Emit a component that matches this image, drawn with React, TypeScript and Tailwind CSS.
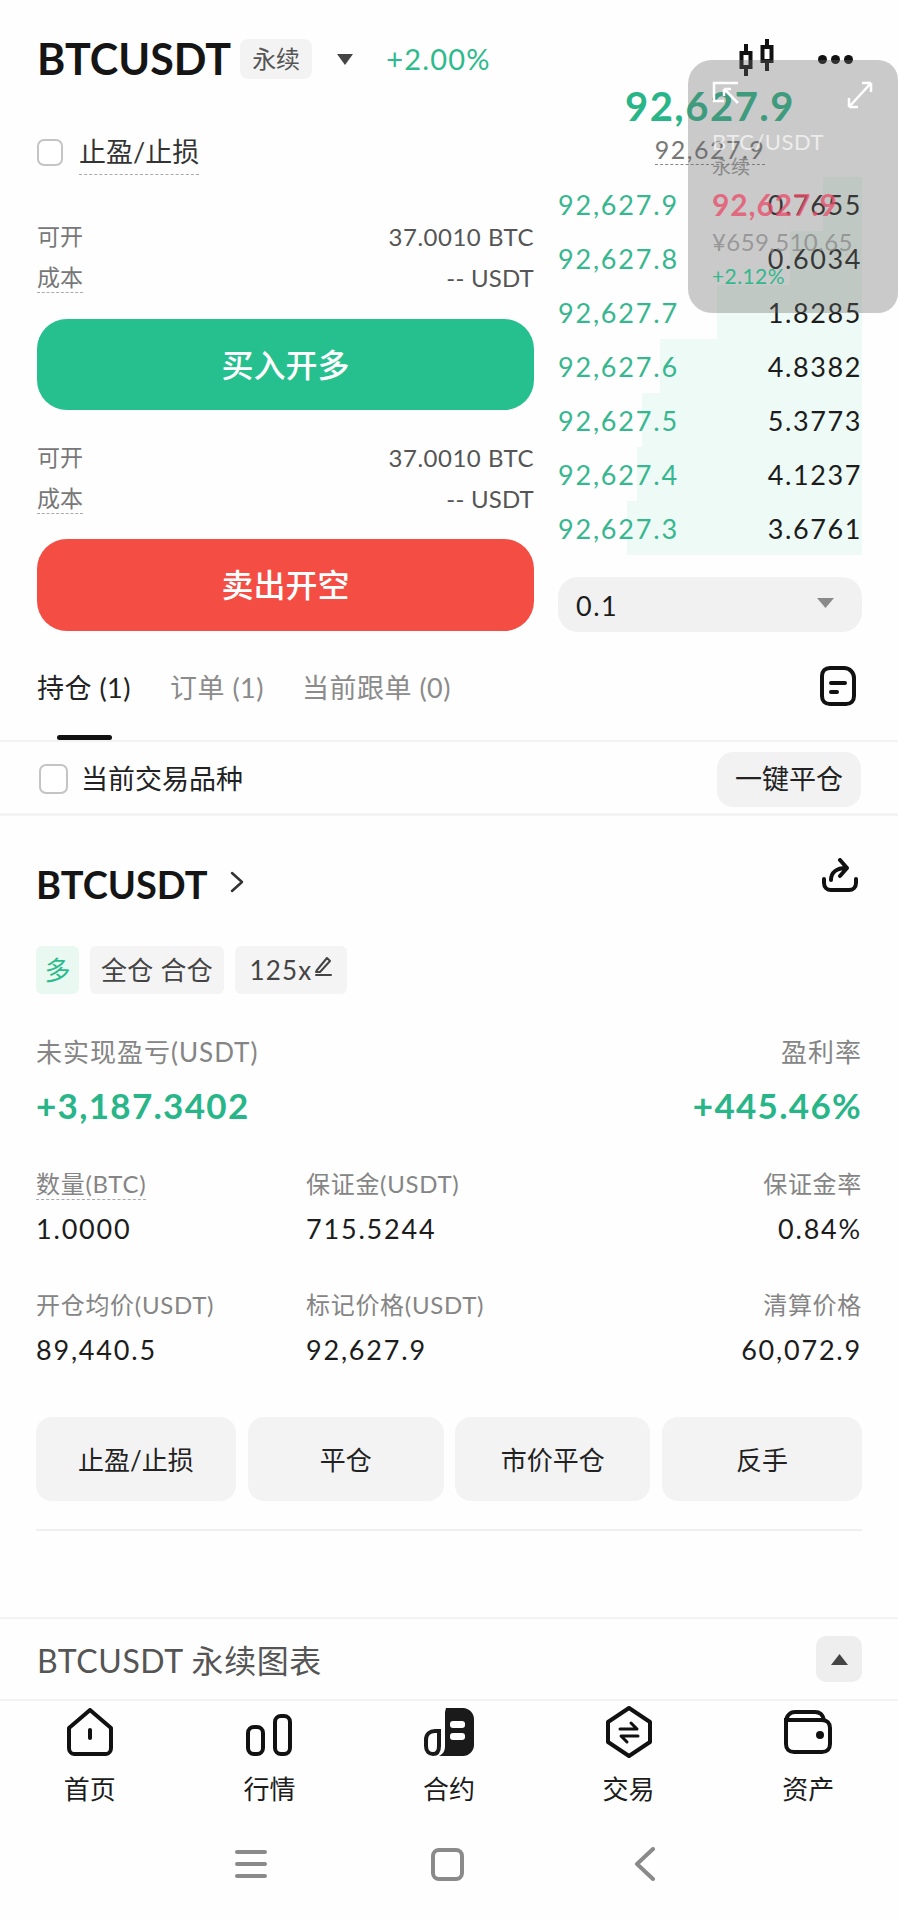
import React from "react";

const book = [
  { price: "92,627.9", qty: "0.7655", w: 39 },
  { price: "92,627.8", qty: "0.6034", w: 72 },
  { price: "92,627.7", qty: "1.8285", w: 145 },
  { price: "92,627.6", qty: "4.8382", w: 202 },
  { price: "92,627.5", qty: "5.3773", w: 220 },
  { price: "92,627.4", qty: "4.1237", w: 225 },
  { price: "92,627.3", qty: "3.6761", w: 235 },
];

function Checkbox({ size }: { size: string }) {
  return <span className={`${size} shrink-0 rounded-[7px] border-2 border-[#c4c4c4] bg-white`} />;
}

function OpenInfo() {
  return (
    <div className="text-[#777]">
      <div className="flex h-[41px] items-center justify-between">
        <span className="text-[23px]">可开</span>
        <span className="text-[24px] tracking-[0.5px] text-[#555]">37.0010 BTC</span>
      </div>
      <div className="flex h-[41px] items-center justify-between">
        <span className="border-b border-dashed border-[#aaa] text-[23px] leading-[30px]">成本</span>
        <span className="text-[24px] tracking-[0.2px] text-[#555]">-- USDT</span>
      </div>
    </div>
  );
}

function Stat({ label, value, right, dashed }: { label: string; value: string; right?: boolean; dashed?: boolean }) {
  return (
    <div className={right ? "text-right" : ""}>
      <div className="flex h-[36px] items-center text-[24px] tracking-[0.7px] text-[#858585]" style={{ justifyContent: right ? "flex-end" : "flex-start" }}>
        <span className={dashed ? "border-b border-dashed border-[#aaa] leading-[30px]" : ""}>{label}</span>
      </div>
      <div className="mt-[9px] flex h-[36px] items-center text-[27px] tracking-[1.8px] text-[#1c1c1c]" style={{ justifyContent: right ? "flex-end" : "flex-start" }}>
        {value}
      </div>
    </div>
  );
}

function NavItem({ label, children }: { label: string; children: React.ReactNode }) {
  return (
    <div className="flex flex-col items-center">
      <div className="flex h-[54px] w-[54px] items-center justify-center">{children}</div>
      <span className="mt-[12px] text-[26px] leading-[36px] text-[#1c1c1c]">{label}</span>
    </div>
  );
}

export default function App() {
  return (
    <main className="relative flex h-[1920px] w-[898px] flex-col overflow-hidden bg-[#fefefe] font-[Lato,'Noto_Sans_CJK_SC',sans-serif] text-[#1c1c1c]">
      {/* Header */}
      <header className="flex h-[84px] items-center px-[37px] pt-[34px]">
        <h1 className="text-[43px] font-bold leading-[50px] text-[#151515]">BTCUSDT</h1>
        <span className="ml-[9px] rounded-[8px] bg-[#f3f3f3] px-[12px] text-[24px] leading-[40px] text-[#555]">永续</span>
        <svg className="ml-[24px]" width="18" height="11" viewBox="0 0 18 11"><path d="M1 0h16l-8 11z" fill="#444" /></svg>
        <span className="ml-[32px] text-[29px] tracking-[1.2px] text-[#2dbb8c]">+2.00%</span>
        <svg className="ml-auto" width="38" height="40" viewBox="0 0 38 40" fill="none" stroke="#111" strokeWidth="4">
          <path d="M8 5v32M29 0v32" />
          <rect x="3.500" y="14" width="9" height="14" fill="#fff" />
          <rect x="24.500" y="8" width="9" height="14" fill="#fff" />
        </svg>
        <div className="ml-[42px] mr-[8px] flex gap-[4px]">
          <span className="h-[9px] w-[9px] rounded-full bg-[#111]" />
          <span className="h-[9px] w-[9px] rounded-full bg-[#111]" />
          <span className="h-[9px] w-[9px] rounded-full bg-[#111]" />
        </div>
      </header>

      {/* Trade panel */}
      <section className="flex gap-[24px] pl-[37px] pr-[36px]">
        <div className="w-[497px]">
          <div className="mt-[50px] flex h-[36px] items-center gap-[16px]">
            <Checkbox size="h-[27px] w-[26px]" />
            <span className="border-b border-dashed border-[#aaa] text-[27px] leading-[44px] text-[#333]">止盈/止损</span>
          </div>
          <div className="mt-[46px]">
            <OpenInfo />
          </div>
          <button className="mt-[21px] h-[91px] w-full rounded-[30px] bg-[#26c08e] text-[32px] font-medium text-white">买入开多</button>
          <div className="mt-[27px]">
            <OpenInfo />
          </div>
          <button className="mt-[20px] h-[92px] w-full rounded-[30px] bg-[#f44d43] text-[32px] font-medium text-white">卖出开空</button>
        </div>

        <div className="w-[304px]">
          <div className="-mt-[2px] flex h-[48px] items-center justify-center text-[40px] font-bold tracking-[1.500px] text-[#28b588]">92,627.9</div>
          <div className="flex h-[42px] items-start justify-center">
            <span className="mt-[5px] border-b border-dashed border-[#888] text-[25px] leading-[29px] tracking-[1.500px] text-[#777]">92,627.9</span>
          </div>
          <div className="mt-[5px]">
            {book.map((row) => (
              <div key={row.price} className="relative flex h-[54px] items-center justify-between pt-[2px]">
                <div className="absolute bottom-0 right-0 top-0 bg-[#eefaf5]" style={{ width: row.w }} />
                <span className="relative text-[27px] tracking-[1.8px] text-[#37b78f]">{row.price}</span>
                <span className="relative text-[27px] tracking-[1.6px] text-[#1c1c1c]">{row.qty}</span>
              </div>
            ))}
          </div>
          <div className="mt-[22px] flex h-[55px] items-center justify-between rounded-[20px] bg-[#f1f1f1] pl-[18px] pr-[28px]">
            <span className="pt-[3px] text-[27px] tracking-[1.5px]">0.1</span>
            <svg className="mb-[4px]" width="17" height="10" viewBox="0 0 17 10"><path d="M0 0h17l-8.500 10z" fill="#8a8a8a" /></svg>
          </div>
        </div>
      </section>

      {/* Tabs */}
      <nav className="border-b-2 border-[#f3f3f3] px-[37px] pt-[36px]">
        <div className="flex h-[40px] items-center text-[27px] tracking-[0.5px] text-[#8b8b8b]">
          <span className="w-[133px] text-[#222]">持仓 (1)</span>
          <span className="w-[132px]">订单 (1)</span>
          <span>当前跟单 (0)</span>
          <svg className="mb-[4px] ml-auto mr-[5px]" width="36" height="40" viewBox="0 0 36 40" fill="none" stroke="#111" strokeWidth="4" strokeLinecap="round">
            <path d="M10 2h14c6 0 10 5 10 10v18c0 5-3 8-8 8H10c-5 0-8-3-8-8V10c0-5 3-8 8-8z" />
            <path d="M11 17h14M11 26h6" />
          </svg>
        </div>
        <div className="ml-[20px] mt-[27px] h-[5px] w-[55px] rounded-full bg-[#111]" />
      </nav>

      {/* Filter */}
      <div className="flex h-[74px] items-center justify-between border-b-[3px] border-[#f3f3f3] pl-[39px] pr-[37px] pt-[3px]">
        <div className="flex items-center gap-[13px]">
          <Checkbox size="h-[30px] w-[29px]" />
          <span className="text-[27px] text-[#222]">当前交易品种</span>
        </div>
        <button className="h-[55px] w-[144px] rounded-[16px] bg-[#f2f2f2] text-[27px] text-[#222]">一键平仓</button>
      </div>

      {/* Position */}
      <section className="px-[36px]">
        <div className="mt-[43px] flex h-[50px] items-center">
          <span className="text-[38px] font-bold text-[#151515]">BTCUSDT</span>
          <svg className="mb-[4px] ml-[22px]" width="14" height="22" viewBox="0 0 14 22" fill="none" stroke="#333" strokeWidth="2.500" strokeLinecap="round" strokeLinejoin="round"><path d="M2 2l10 9-10 9" /></svg>
          <svg className="mb-[18px] ml-auto mr-[4px]" width="36" height="34" viewBox="0 0 36 34" fill="none" stroke="#111" strokeWidth="4" strokeLinecap="round" strokeLinejoin="round">
            <path d="M2 21v4c0 4 3 7 7 7h18c4 0 7-3 7-7v-4" />
            <path d="M9 22c0-8 6-12 15-12M18 2l7 8-7 8" />
          </svg>
        </div>

        <div className="mt-[37px] flex h-[48px] text-[26px]">
          <span className="flex w-[43px] items-center justify-center rounded-[6px] bg-[#e9f9f2] text-[#2dbb8c]">多</span>
          <span className="ml-[11px] flex w-[134px] items-center justify-center rounded-[6px] bg-[#f4f4f4] tracking-[0.3px] text-[#444]">全仓 合仓</span>
          <span className="ml-[11px] flex w-[112px] items-center justify-center rounded-[6px] bg-[#f4f4f4] tracking-[1.2px] text-[#444]">
            125x
            <svg className="mb-[8px]" width="20" height="22" viewBox="0 0 20 22" fill="none" stroke="#444" strokeWidth="2" strokeLinecap="round" strokeLinejoin="round">
              <path d="M3 20h15M4 15L14 3l3 3L7 17l-4 0z" />
            </svg>
          </span>
        </div>

        <div className="mt-[40px] flex h-[36px] items-center justify-between text-[26px] tracking-[1px] text-[#858585]">
          <span>未实现盈亏(USDT)</span>
          <span>盈利率</span>
        </div>
        <div className="mt-[15px] flex h-[40px] items-center justify-between text-[35px] font-bold tracking-[1.3px] text-[#28b588]">
          <span>+3,187.3402</span>
          <span>+445.46%</span>
        </div>

        <div className="mt-[41px] grid grid-cols-[270px_1fr_auto]">
          <Stat label="数量(BTC)" value="1.0000" dashed />
          <Stat label="保证金(USDT)" value="715.5244" />
          <Stat label="保证金率" value="0.84%" right />
        </div>
        <div className="mt-[40px] grid grid-cols-[270px_1fr_auto]">
          <Stat label="开仓均价(USDT)" value="89,440.5" />
          <Stat label="标记价格(USDT)" value="92,627.9" />
          <Stat label="清算价格" value="60,072.9" right />
        </div>

        <div className="mt-[49px] flex h-[84px] justify-between text-[26px] text-[#222]">
          <button className="w-[200px] rounded-[16px] bg-[#f3f3f3] pt-[3px]">止盈/止损</button>
          <button className="w-[196px] rounded-[16px] bg-[#f3f3f3] pt-[3px]">平仓</button>
          <button className="w-[195px] rounded-[16px] bg-[#f3f3f3] pt-[3px]">市价平仓</button>
          <button className="w-[200px] rounded-[16px] bg-[#f3f3f3] pt-[3px]">反手</button>
        </div>
        <div className="mt-[28px] h-[2px] bg-[#f0f0f0]" />
      </section>

      {/* Chart bar */}
      <div className="mt-[86px] flex h-[84px] items-center justify-between border-y-2 border-[#f3f3f3] pl-[37px] pr-[36px]">
        <span className="pt-[3px] text-[32px] tracking-[0.6px] text-[#555]">BTCUSDT 永续图表</span>
        <span className="flex h-[46px] w-[46px] items-center justify-center rounded-[10px] bg-[#eee]">
          <svg width="17" height="11" viewBox="0 0 17 11"><path d="M8.500 0L17 11H0z" fill="#444" /></svg>
        </span>
      </div>

      {/* Bottom nav */}
      <footer className="mt-[4px] grid grid-cols-5">
        <NavItem label="首页">
          <svg width="46" height="48" viewBox="0 0 46 48" fill="none" stroke="#111" strokeWidth="4" strokeLinejoin="round" strokeLinecap="round">
            <path d="M23 2L44 20v20c0 3-2 6-5 6H7c-3 0-5-3-5-6V20z" />
            <path d="M23 22v8" />
          </svg>
        </NavItem>
        <NavItem label="行情">
          <svg className="mt-[5px]" width="46" height="42" viewBox="0 0 46 42" fill="none" stroke="#111" strokeWidth="4">
            <rect x="2" y="13" width="15" height="27" rx="6" />
            <rect x="29" y="2" width="15" height="38" rx="6" />
          </svg>
        </NavItem>
        <NavItem label="合约">
          <svg width="50" height="48" viewBox="0 0 50 48">
            <path d="M22 0h17c6 0 11 5 11 11v26c0 6-5 11-11 11H15c4-2 6-5 6-10V4z" fill="#1a1a1a" />
            <path d="M11 23c-5 0-9 3-9 9v6c0 5 3 8 7 8s6-3 6-8V23z" fill="none" stroke="#1a1a1a" strokeWidth="4" />
            <rect x="26" y="13" width="15" height="7" rx="3" fill="#fff" />
            <rect x="26" y="25" width="15" height="7" rx="3" fill="#fff" />
          </svg>
        </NavItem>
        <NavItem label="交易">
          <svg width="46" height="52" viewBox="0 0 46 52" fill="none" stroke="#111" strokeWidth="4" strokeLinejoin="round" strokeLinecap="round">
            <path d="M23 2L44 16v20L23 50 2 36V16z" />
            <path d="M14 23h17l-6-6M32 30H15l6 6" strokeWidth="3" />
          </svg>
        </NavItem>
        <NavItem label="资产">
          <svg width="48" height="44" viewBox="0 0 48 44" fill="none" stroke="#111" strokeWidth="4">
            <path d="M2 12c0-6 4-10 9-10h20c5 0 8 3 9 8M2 12v22c0 5 3 8 8 8h28c5 0 8-3 8-8V18c0-5-3-8-8-8H2z" />
            <circle cx="36" cy="25" r="4" fill="#111" stroke="none" />
          </svg>
        </NavItem>
      </footer>

      {/* System nav */}
      <div className="mt-[40px] flex items-center justify-center pr-[8px] text-[#888]">
        <svg className="mr-[164px]" width="32" height="30" viewBox="0 0 32 30" stroke="#8a8a8a" strokeWidth="4" strokeLinecap="round"><path d="M2 3h28M2 15h28M2 27h28" /></svg>
        <span className="mr-[170px] h-[33px] w-[33px] rounded-[8px] border-[4px] border-[#8a8a8a]" />
        <svg width="22" height="34" viewBox="0 0 22 34" fill="none" stroke="#8a8a8a" strokeWidth="4" strokeLinecap="round" strokeLinejoin="round"><path d="M19 2L3 17l16 15" /></svg>
      </div>

      {/* Floating mini window */}
      <aside className="absolute left-[688px] top-[60px] h-[253px] w-[210px] rounded-l-[24px] rounded-r-[20px] bg-[#6b6b6b]/35 pl-[24px] pt-[21px]">
        <div className="flex items-start justify-between pr-[25px]">
          <svg width="30" height="24" viewBox="0 0 30 24" fill="none" stroke="#fff" strokeWidth="2.500">
            <path d="M26 2H2v18h10M12 8l14 14M12 8h7M12 8v7" />
          </svg>
          <svg width="26" height="28" viewBox="0 0 26 28" fill="none" stroke="#fff" strokeWidth="2.500">
            <path d="M2 26L24 2M2 26v-9M2 26h9M24 2v9M24 2h-9" />
          </svg>
        </div>
        <div className="mt-[21px] text-[22px] leading-[24px] tracking-[0.5px] text-white/65">BTC/USDT</div>
        <div className="text-[19px] leading-[26px] text-[#888]">永续</div>
        <div className="mt-[6px] text-[30px] font-bold leading-[36px] tracking-[0.9px] text-[#e8506c]/80">92,627.9</div>
        <div className="mt-[5px] text-[24px] leading-[30px] tracking-[0.4px] text-[#8a8a8a]/80">¥659,510.65</div>
        <div className="mt-[5px] text-[21px] leading-[28px] tracking-[0.4px] text-[#33b88c]">+2.12%</div>
      </aside>
    </main>
  );
}
